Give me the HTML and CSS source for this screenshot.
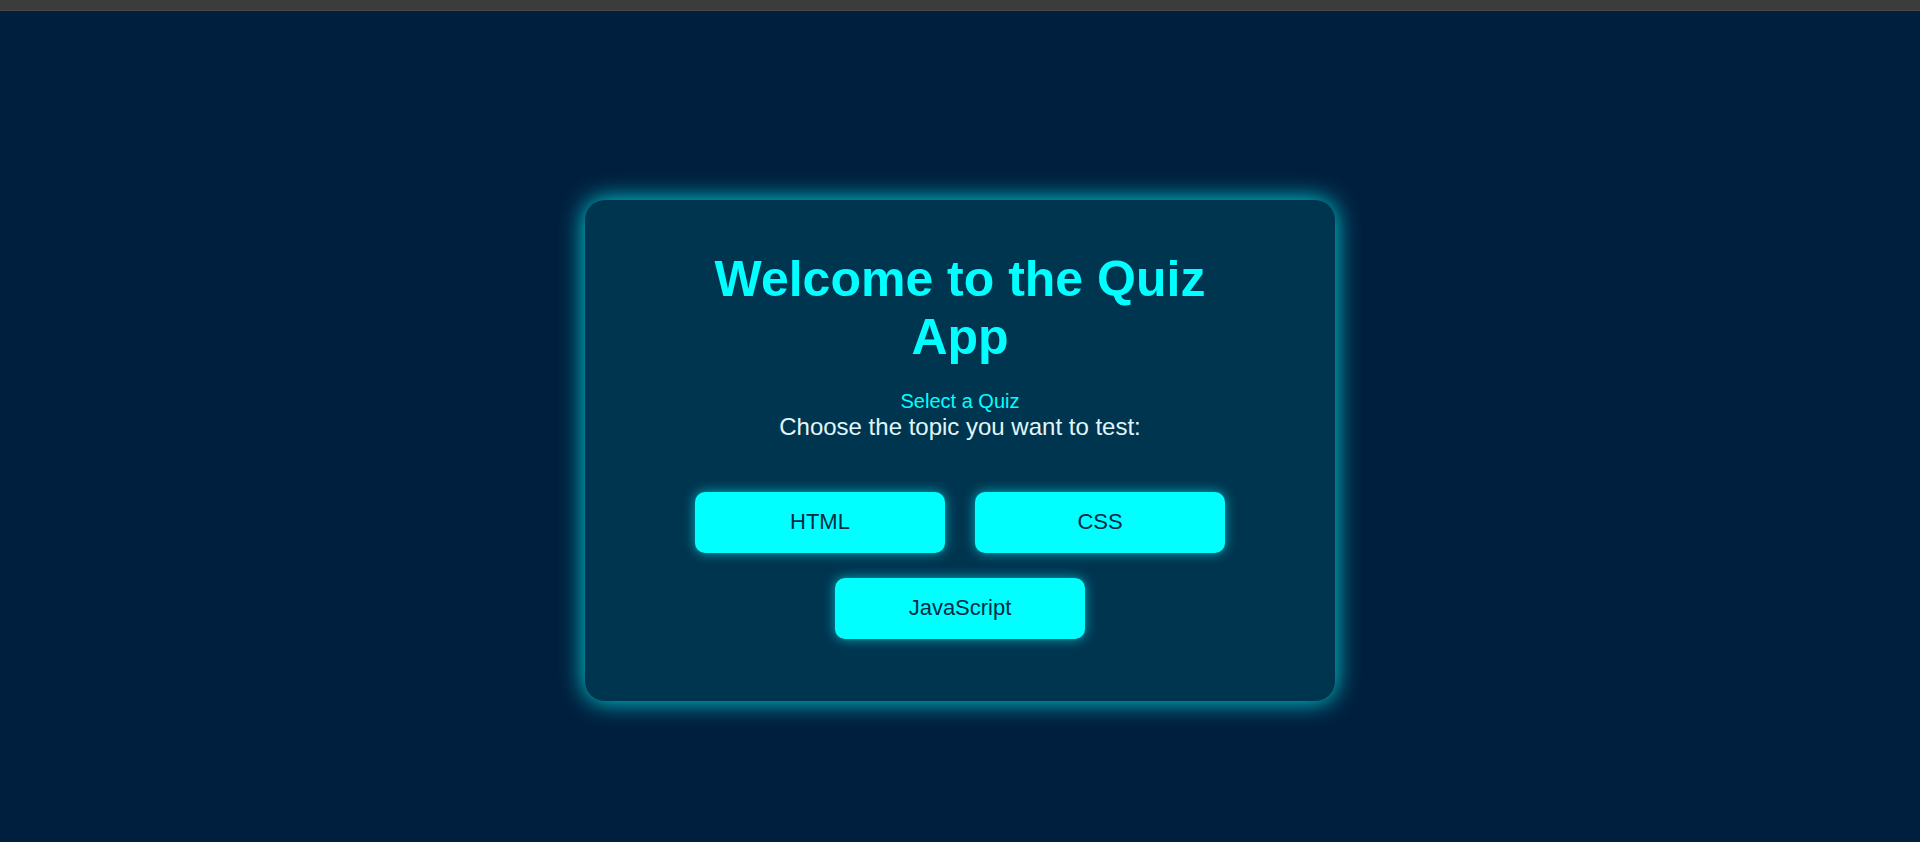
FILE: index.html
```html
<!DOCTYPE html>
<html lang="en">
<head>
<meta charset="utf-8">
<title>Quiz App</title>
<link rel="stylesheet" href="styles.css">
</head>
<body>
<div class="topbar"></div>
<main class="page">
  <section class="card">
    <h1 class="title">Welcome to the Quiz App</h1>
    <div class="subtitle">Select a Quiz</div>
    <p class="prompt">Choose the topic you want to test:</p>
    <div class="options">
      <button class="option">HTML</button>
      <button class="option">CSS</button>
      <button class="option">JavaScript</button>
    </div>
  </section>
</main>
</body>
</html>
```
FILE: styles.css
```css
* { box-sizing: border-box; }
html, body {
  margin: 0;
  padding: 0;
  height: 100%;
}
body {
  background: #001f3e;
  font-family: "Liberation Sans", Arial, sans-serif;
  overflow: hidden;
}
.topbar {
  height: 11px;
  background: #3c3c3c;
  border-bottom: 1px solid #4a4a4a;
}
.page {
  padding-top: 189px;
  display: flex;
  justify-content: center;
}
.card {
  width: 750px;
  background: #003550;
  border-radius: 20px;
  box-shadow: 0 0 25px rgba(0, 255, 255, 0.85);
  padding: 51px 80px 62px;
  display: flex;
  flex-direction: column;
  align-items: center;
  text-align: center;
}
.title {
  margin: 0 0 24px;
  font-size: 50px;
  line-height: 57.5px;
  font-weight: bold;
  color: #00ffff;
}
.subtitle {
  font-size: 20px;
  line-height: 23px;
  color: #00ffff;
}
.prompt {
  margin: 0 0 51px;
  font-size: 24px;
  line-height: 28px;
  color: #e0f7fa;
}
.options {
  width: 100%;
  display: flex;
  flex-wrap: wrap;
  justify-content: center;
  column-gap: 30px;
  row-gap: 25px;
}
.option {
  width: 250px;
  height: 61px;
  border: none;
  border-radius: 10px;
  background: #00ffff;
  color: #002b45;
  font-family: "Liberation Sans", Arial, sans-serif;
  font-size: 22px;
  box-shadow: 0 0 12px rgba(0, 255, 255, 0.6);
  cursor: pointer;
  padding: 0 0 2px;
}
```
